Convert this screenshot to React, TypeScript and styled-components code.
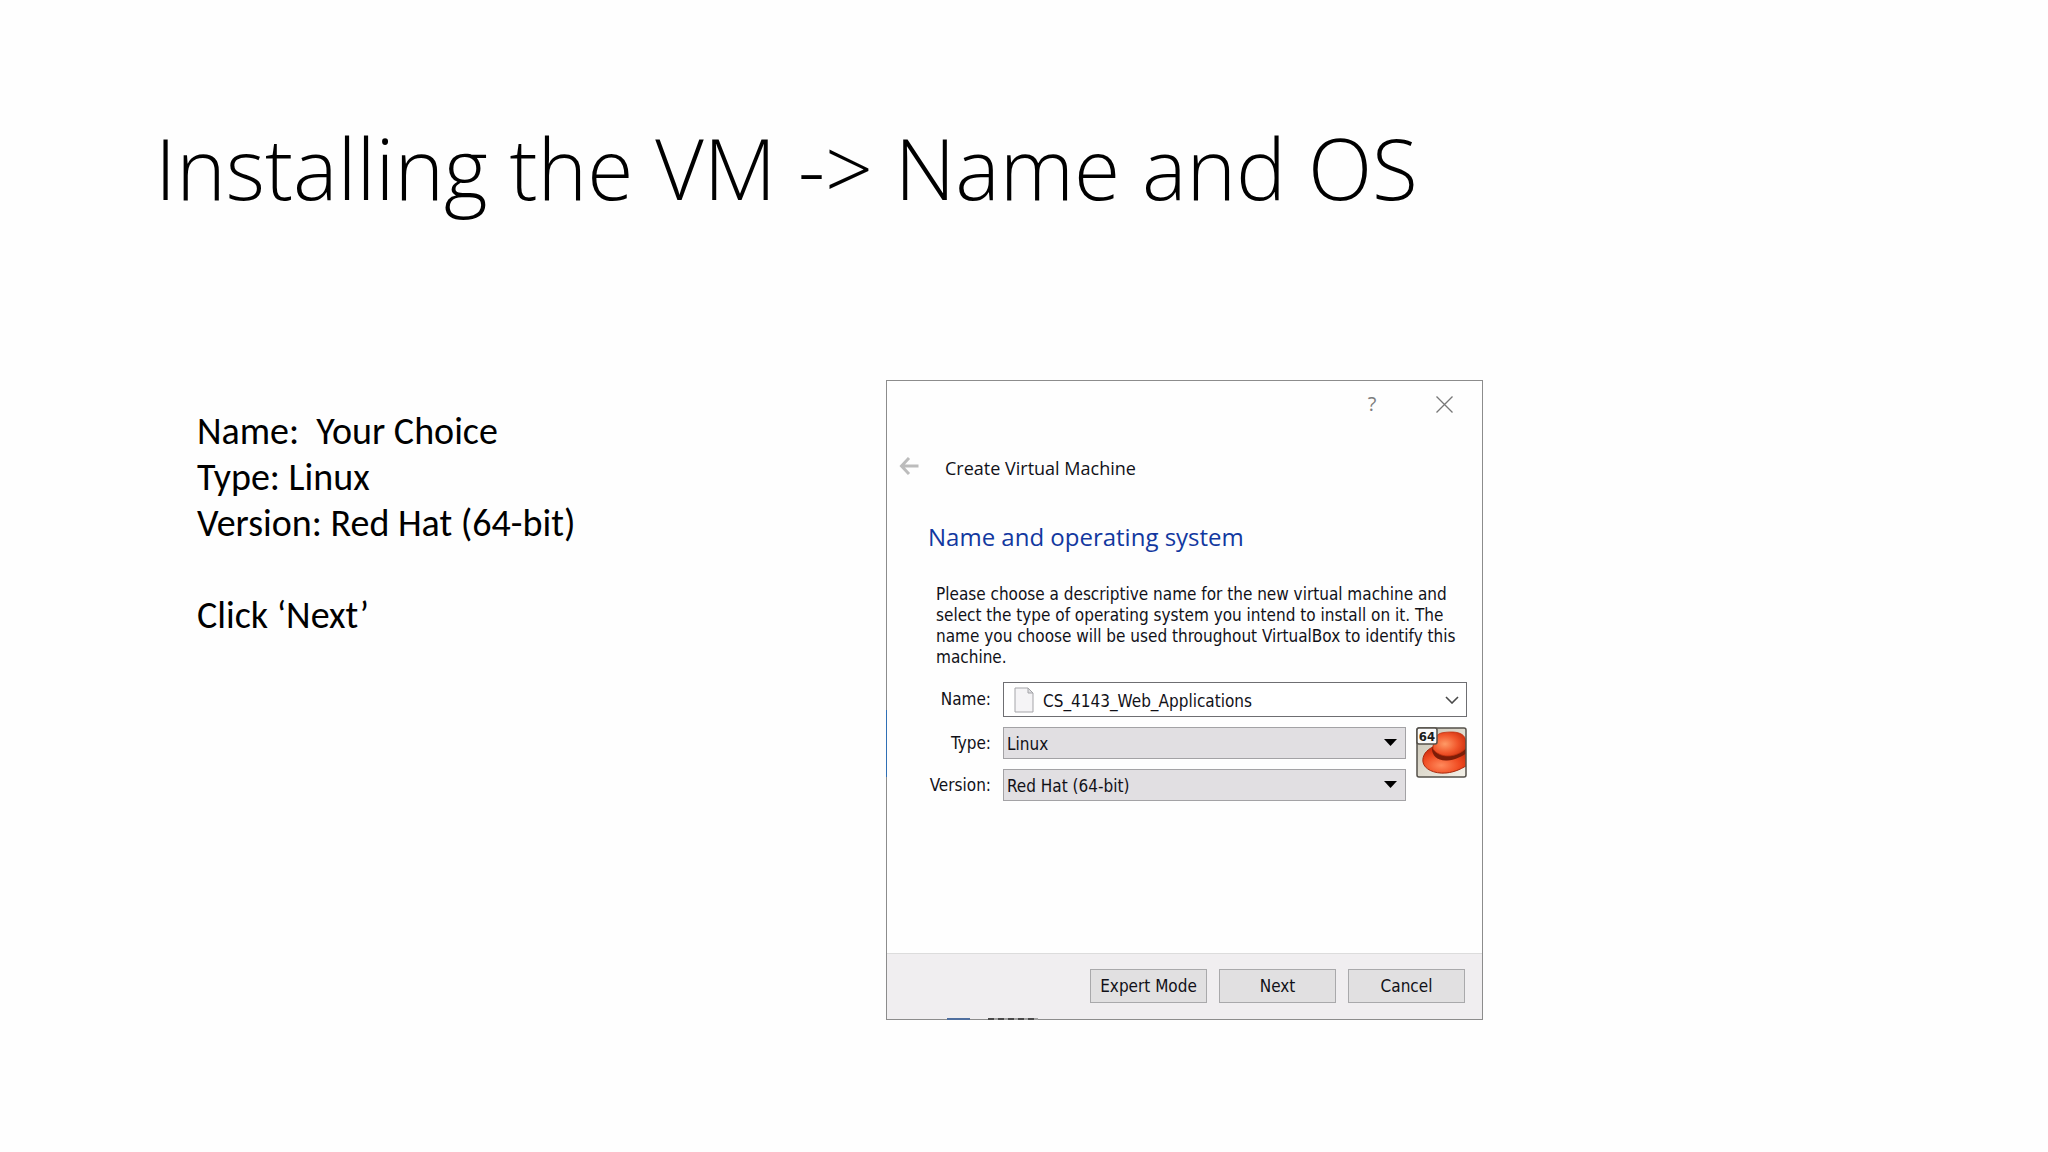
import React, { useState } from "react";
import styled, { createGlobalStyle } from "styled-components";

const uiFont = `"DejaVu Sans Condensed", "DejaVu Sans", sans-serif`;
const titleFont = `"Open Sans", "Noto Sans", sans-serif`;

const GlobalStyle = createGlobalStyle`
  *, *::before, *::after { box-sizing: border-box; }
  body { margin: 0; background: #fefefe; color: #000; }
`;

const Slide = styled.main`
  min-height: 100vh;
  padding: 112px 197px 132px 155px;
  display: flex;
  flex-direction: column;
  gap: 156px;
`;

const Title = styled.h1`
  margin: 0;
  font: 330 84px/112px ${titleFont};
`;

const Content = styled.div`
  display: grid;
  grid-template-columns: 689fr 965fr;
  align-items: start;
  padding-left: 42px;
`;

const Notes = styled.div`
  padding-top: 28px;
  font: 400 38px/46px Carlito, Calibri, Lato, sans-serif;
`;

const Note = styled.p<{ $spaced?: boolean }>`
  margin: ${(p) => (p.$spaced ? "46px" : "0")} 0 0;
  white-space: pre-wrap;
`;

const Dialog = styled.section`
  position: relative;
  max-width: 597px;
  display: flex;
  flex-direction: column;
  border: 1px solid #8c8c8c;
  background: #fefefe;
  color: #111118;
  font: 400 17px/21px ${uiFont};
`;

const EdgeMark = styled.span<{ $side: "left" | "bottom"; $at: number; $length: number; $color: string }>`
  position: absolute;
  background: ${(p) => p.$color};
  ${(p) =>
    p.$side === "left"
      ? `left: -1px; top: ${p.$at}px; width: 1px; height: ${p.$length}px;`
      : `bottom: -1px; left: ${p.$at}px; height: 2px; width: ${p.$length}px;`}
`;

const TitleBar = styled.div`
  display: flex;
  justify-content: flex-end;
  gap: 40px;
  padding: 7px 22px 0 0;
`;

const PlainButton = styled.button`
  display: flex;
  align-items: center;
  justify-content: center;
  width: 32px;
  height: 32px;
  padding: 0;
  border: 0;
  background: none;
  color: #7d7d7d;
  font: 400 20px/32px ${titleFont};
`;

const DialogHeader = styled.header`
  display: flex;
  align-items: center;
  gap: 20px;
  padding: 27px 6px 0;
`;

const DialogName = styled.h2`
  margin: 0;
  padding-top: 5px;
  font: 400 18px/32px ${titleFont};
`;

const DialogBody = styled.div`
  padding: 35px 15px 152px 41px;
`;

const Heading = styled.h3`
  margin: 0;
  color: #1238a0;
  font: 400 24px/36px ${titleFont};
`;

const Description = styled.p`
  margin: 29px 0 14px;
  padding-left: 8px;
`;

const Form = styled.form`
  display: grid;
  grid-template-columns: 63px 1fr 51px;
  column-gap: 10px;
  row-gap: 10px;
`;

const Label = styled.label`
  display: flex;
  align-items: center;
  justify-content: flex-end;
`;

const NameBox = styled.div`
  grid-column: 2 / 4;
  display: flex;
  align-items: center;
  height: 35px;
  margin-left: 2px;
  padding: 0 4px 0 10px;
  border: 1px solid #6e6e72;
  background: #fff;
`;

const NameInput = styled.input`
  flex: 1;
  min-width: 0;
  padding: 3px 0 0 9px;
  border: 0;
  outline: 0;
  background: none;
  color: inherit;
  font: inherit;
`;

const DropButton = styled(PlainButton)`
  width: 20px;
  color: #4a4a4a;
`;

const SelectBox = styled.div`
  position: relative;
  margin-left: 2px;
`;

const Select = styled.select`
  appearance: none;
  display: block;
  width: 100%;
  height: 32px;
  padding: 3px 32px 0 3px;
  border: 1px solid #a3a2a5;
  border-radius: 0;
  background: #e1dfe2;
  color: inherit;
  font: inherit;
`;

const SelectArrow = styled.svg`
  position: absolute;
  right: 9px;
  top: 12px;
  pointer-events: none;
`;

const OsBadge = styled.div`
  grid-row: 2 / 4;
  grid-column: 3;
  height: 51px;
`;

const Footer = styled.footer`
  display: flex;
  justify-content: flex-end;
  gap: 12px;
  padding: 15px 17px 16px;
  border-top: 1px solid #dcdcdc;
  background: #f0eef0;
`;

const Button = styled.button`
  width: 117px;
  height: 34px;
  padding: 1px 0 0;
  border: 1px solid #a9a9ab;
  background: #e1e0e1;
  color: inherit;
  font: inherit;
  white-space: nowrap;
`;

function BackIcon() {
  return (
    <svg width="20" height="18" viewBox="0 0 20 18" fill="none" stroke="#bcbcbc" strokeWidth="3">
      <path d="M19.500 9H2.500M10 1L2.500 9L10 17" />
    </svg>
  );
}

function CloseIcon() {
  return (
    <svg width="17" height="17" viewBox="0 0 17 17" fill="none" stroke="#777" strokeWidth="1.300">
      <path d="M.5.5l16 16M16.500.5l-16 16" />
    </svg>
  );
}

function PageIcon() {
  return (
    <svg width="20" height="26" viewBox="0 0 20 26" stroke="#a5a5a9">
      <path d="M1 1h13l5 5v19H1z" fill="#f5f4f6" />
      <path d="M14 1v5h5z" fill="#dedee1" />
    </svg>
  );
}

function ChevronIcon() {
  return (
    <svg width="14" height="8" viewBox="0 0 14 8" fill="none" stroke="currentColor" strokeWidth="1.600">
      <path d="M1 1l6 6l6-6" />
    </svg>
  );
}

function HatIcon() {
  return (
    <svg width="51" height="51" viewBox="0 0 51 51" role="img" aria-label="Red Hat, 64-bit">
      <defs>
        <clipPath id="tile"><rect x="1" y="1" width="49" height="49" rx="2" /></clipPath>
        <linearGradient id="paper" x1="0" y1="0" x2="1" y2="1">
          <stop offset="0" stopColor="#c9c4b5" />
          <stop offset="1" stopColor="#f4f1e8" />
        </linearGradient>
        <radialGradient id="crown" cx=".35" cy=".5" r=".7">
          <stop offset="0" stopColor="#ff9a66" />
          <stop offset=".55" stopColor="#f0552a" />
          <stop offset="1" stopColor="#c92c0c" />
        </radialGradient>
        <radialGradient id="brim" cx=".4" cy=".7" r=".65">
          <stop offset="0" stopColor="#ff8a5c" />
          <stop offset=".6" stopColor="#f04c22" />
          <stop offset="1" stopColor="#cf2e0e" />
        </radialGradient>
      </defs>
      <rect x="1" y="1" width="49" height="49" rx="2" fill="url(#paper)" />
      <g clipPath="url(#tile)">
        <path d="M17 20C10 23 6 29 7 35C8 42 18 47 30 46C40 45 47 41 53 37V22z" fill="url(#brim)" stroke="#a72b10" />
        <path d="M16 22C16 28 21 34 31 33.500C40 33 47 29 52 25V18L18 15z" fill="#7c1d08" />
        <path d="M17 22C17 13 20 6 28 5.500C36 4.500 45 4.500 48.500 10C50 13 50.500 17 51 20C43 30 25 33 17 22z" fill="url(#crown)" stroke="#c2310f" strokeWidth=".8" />
      </g>
      <rect x="1" y="1" width="49" height="49" rx="2" fill="none" stroke="#54504a" strokeWidth="1.500" />
      <rect x="1" y="1" width="20" height="16" rx="2" fill="#fafafa" stroke="#54504a" strokeWidth="1.500" />
      <text x="11" y="13.500" textAnchor="middle" fontFamily="DejaVu Sans Condensed, sans-serif" fontSize="13" fontWeight="700" fill="#1c1c1c">64</text>
    </svg>
  );
}

interface OptionSelectProps {
  id: string;
  options: string[];
}

function OptionSelect({ id, options }: OptionSelectProps) {
  return (
    <SelectBox>
      <Select id={id}>
        {options.map((option) => (
          <option key={option}>{option}</option>
        ))}
      </Select>
      <SelectArrow width="13" height="7" viewBox="0 0 13 7">
        <path d="M0 0h13L6.500 7z" fill="#000" />
      </SelectArrow>
    </SelectBox>
  );
}

export default function App() {
  const [name, setName] = useState("CS_4143_Web_Applications");

  return (
    <Slide>
      <GlobalStyle />
      <Title>Installing the VM -&gt; Name and OS</Title>
      <Content>
        <Notes>
          <Note>{"Name:  Your Choice"}</Note>
          <Note>Type: Linux</Note>
          <Note>Version: Red Hat (64-bit)</Note>
          <Note $spaced>Click ‘Next’</Note>
        </Notes>
        <Dialog aria-labelledby="dialog-name">
          <TitleBar>
            <PlainButton type="button" aria-label="Help">?</PlainButton>
            <PlainButton type="button" aria-label="Close"><CloseIcon /></PlainButton>
          </TitleBar>
          <DialogHeader>
            <PlainButton type="button" aria-label="Back"><BackIcon /></PlainButton>
            <DialogName id="dialog-name">Create Virtual Machine</DialogName>
          </DialogHeader>
          <DialogBody>
            <Heading>Name and operating system</Heading>
            <Description>
              Please choose a descriptive name for the new virtual machine and select the type of
              operating system you intend to install on it. The name you choose will be used
              throughout VirtualBox to identify this machine.
            </Description>
            <Form>
              <Label htmlFor="vm-name">Name:</Label>
              <NameBox>
                <PageIcon />
                <NameInput id="vm-name" value={name} onChange={(e) => setName(e.target.value)} />
                <DropButton type="button" aria-label="Show folders"><ChevronIcon /></DropButton>
              </NameBox>
              <Label htmlFor="vm-type">Type:</Label>
              <OptionSelect id="vm-type" options={["Linux"]} />
              <OsBadge><HatIcon /></OsBadge>
              <Label htmlFor="vm-version">Version:</Label>
              <OptionSelect id="vm-version" options={["Red Hat (64-bit)"]} />
            </Form>
          </DialogBody>
          <Footer>
            <Button type="button">Expert Mode</Button>
            <Button type="button">Next</Button>
            <Button type="button">Cancel</Button>
          </Footer>
          <EdgeMark $side="left" $at={329} $length={67} $color="#2f6fb5" />
          <EdgeMark $side="bottom" $at={60} $length={23} $color="#4f6f9f" />
          <EdgeMark $side="bottom" $at={101} $length={50} $color="repeating-linear-gradient(90deg, #4a4a4a 0 6px, #a0a0a0 6px 10px)" />
        </Dialog>
      </Content>
    </Slide>
  );
}
